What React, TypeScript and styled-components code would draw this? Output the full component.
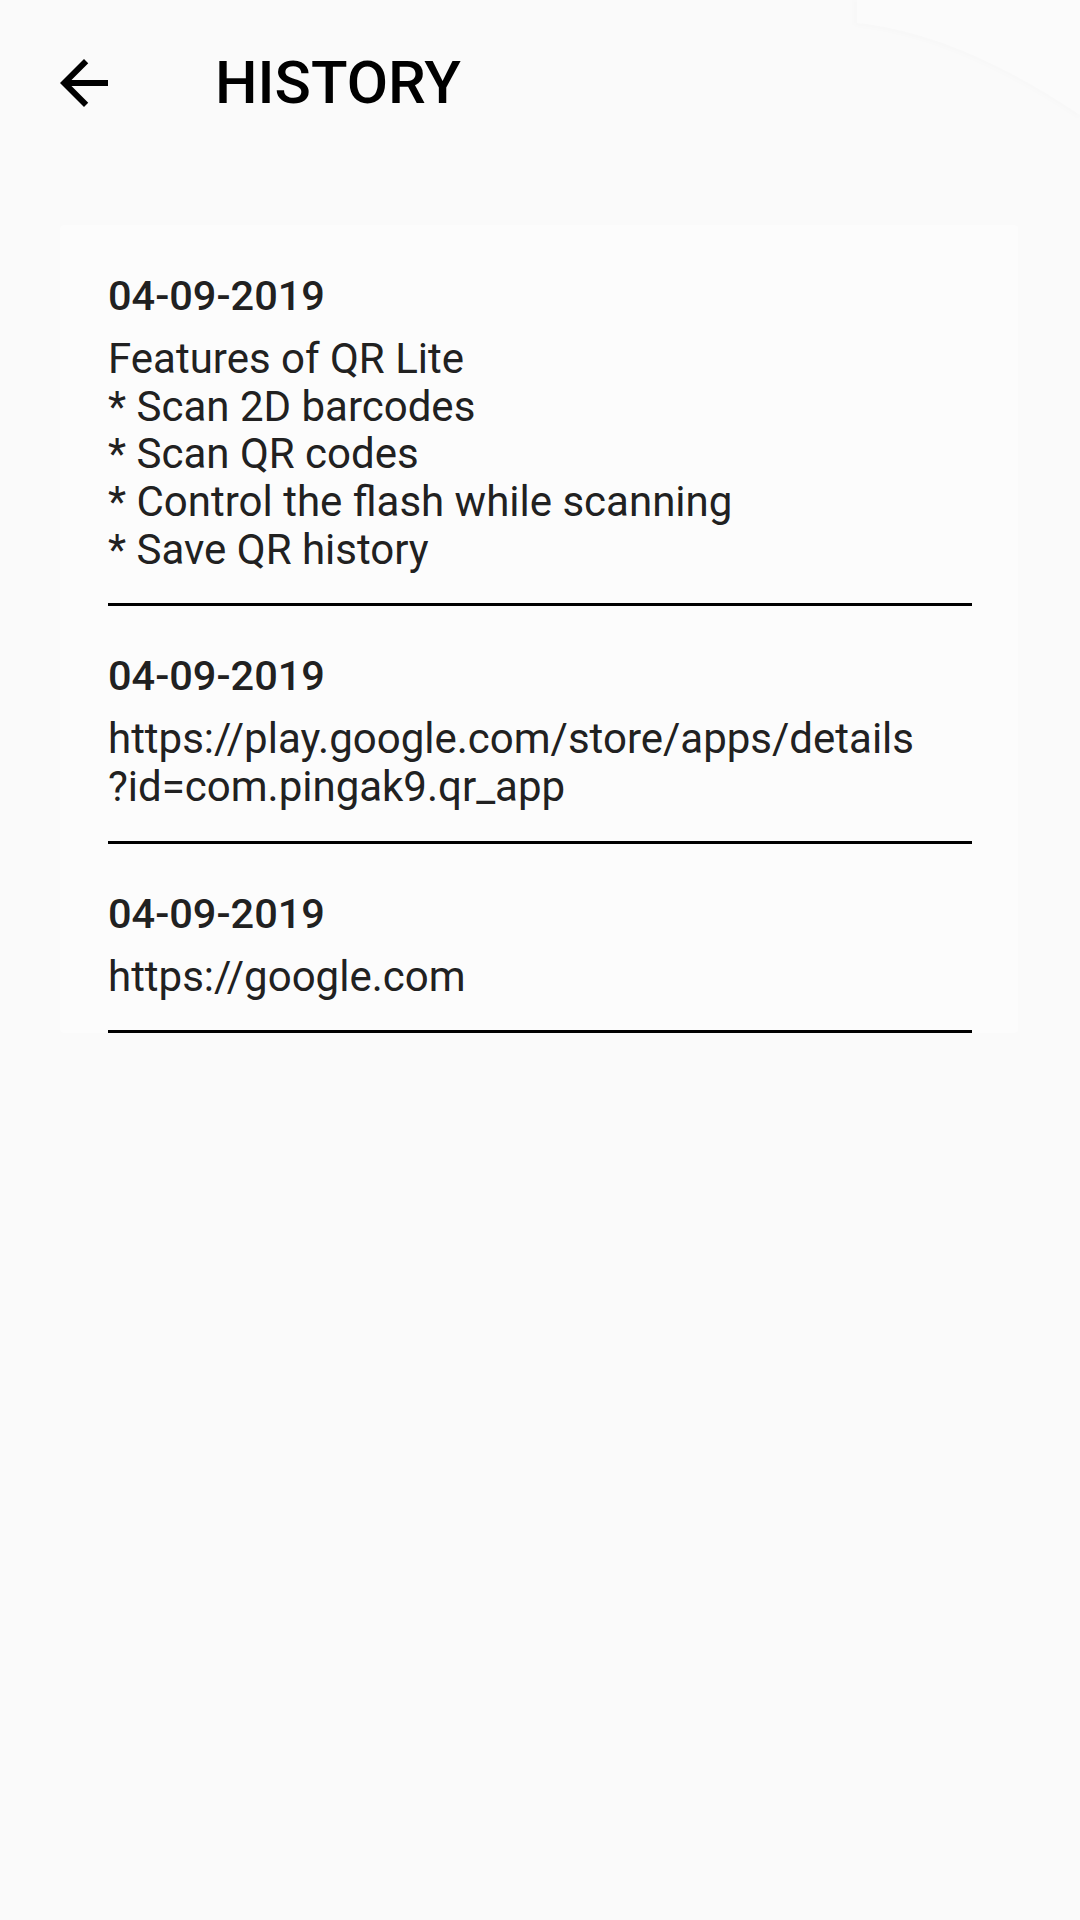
import React from "react";
import styled, { createGlobalStyle } from "styled-components";

const GlobalStyle = createGlobalStyle`
  html, body {
    margin: 0;
    padding: 0;
    background: #fafafa;
  }
  body {
    font-family: Roboto, "Noto Sans", "Liberation Sans", sans-serif;
    color: #212121;
  }
`;

const Screen = styled.div`
  position: relative;
  width: 1080px;
  min-height: 1920px;
  background: #fafafa;
  overflow: hidden;
`;

const Corner = styled.svg`
  position: absolute;
  top: 0;
  right: 0;
  width: 230px;
  height: 130px;
  pointer-events: none;
`;

const Header = styled.header`
  display: flex;
  align-items: center;
  height: 166px;
  padding-left: 48px;
  box-sizing: border-box;
`;

const BackButton = styled.button`
  display: flex;
  align-items: center;
  justify-content: center;
  width: 72px;
  height: 72px;
  padding: 0;
  border: none;
  background: transparent;
  color: #000;
  cursor: pointer;
`;

const Title = styled.h1`
  margin: 0 0 0 95px;
  font-family: Roboto, "Liberation Sans", sans-serif;
  font-size: 60px;
  font-weight: 500;
  line-height: 1;
  color: #000;
  letter-spacing: 0;
`;

const Main = styled.main`
  padding: 59px 62px 0 60px;
`;

const Card = styled.section`
  display: flex;
  flex-direction: column;
  padding: 1px 46px 0 48px;
  background: #fcfcfc;
  border-radius: 4px;
`;

const Item = styled.article`
  display: flex;
  flex-direction: column;
  padding-top: 47px;
`;

const DateLabel = styled.div`
  font-family: Roboto, "Liberation Sans", sans-serif;
  font-size: 41.5px;
  font-weight: 500;
  line-height: 46px;
  color: #212121;
`;

const Body = styled.div`
  margin-top: 16px;
  font-family: Roboto, "Liberation Sans", sans-serif;
  font-size: 42px;
  font-weight: 400;
  line-height: 47.7px;
  color: #212121;
  white-space: pre-line;
`;

const Divider = styled.div`
  margin-top: 29.8px;
  height: 3px;
  background: #000;
`;

const items = [
  {
    date: "04-09-2019",
    text:
      "Features of QR Lite\n* Scan 2D barcodes\n* Scan QR codes\n* Control the flash while scanning\n* Save QR history",
  },
  {
    date: "04-09-2019",
    text: "https://play.google.com/store/apps/details\n?id=com.pingak9.qr_app",
  },
  {
    date: "04-09-2019",
    text: "https://google.com",
  },
];

export default function App() {
  return (
    <Screen>
      <GlobalStyle />
      <Corner viewBox="0 0 230 130" aria-hidden="true">
        <defs>
          <filter id="soft" x="-20%" y="-20%" width="140%" height="140%">
            <feGaussianBlur stdDeviation="2.5" />
          </filter>
        </defs>
        <path
          d="M7 0 L7 23 C70 30 140 55 230 115"
          fill="none"
          stroke="rgba(0,0,0,0.015)"
          strokeWidth="4"
          filter="url(#soft)"
        />
        <path d="M7 0 L7 23 C70 30 140 55 230 115 L230 0 Z" fill="#fbfbfb" />
      </Corner>
      <Header>
        <BackButton aria-label="Back">
          <svg width="72" height="72" viewBox="0 0 24 24" fill="currentColor">
            <path d="M20 11H7.83l5.59-5.59L12 4l-8 8 8 8 1.41-1.41L7.83 13H20v-2z" />
          </svg>
        </BackButton>
        <Title>HISTORY</Title>
      </Header>
      <Main>
        <Card>
          {items.map((it, i) => (
            <Item key={i}>
              <DateLabel>{it.date}</DateLabel>
              <Body>{it.text}</Body>
              <Divider />
            </Item>
          ))}
        </Card>
      </Main>
    </Screen>
  );
}
